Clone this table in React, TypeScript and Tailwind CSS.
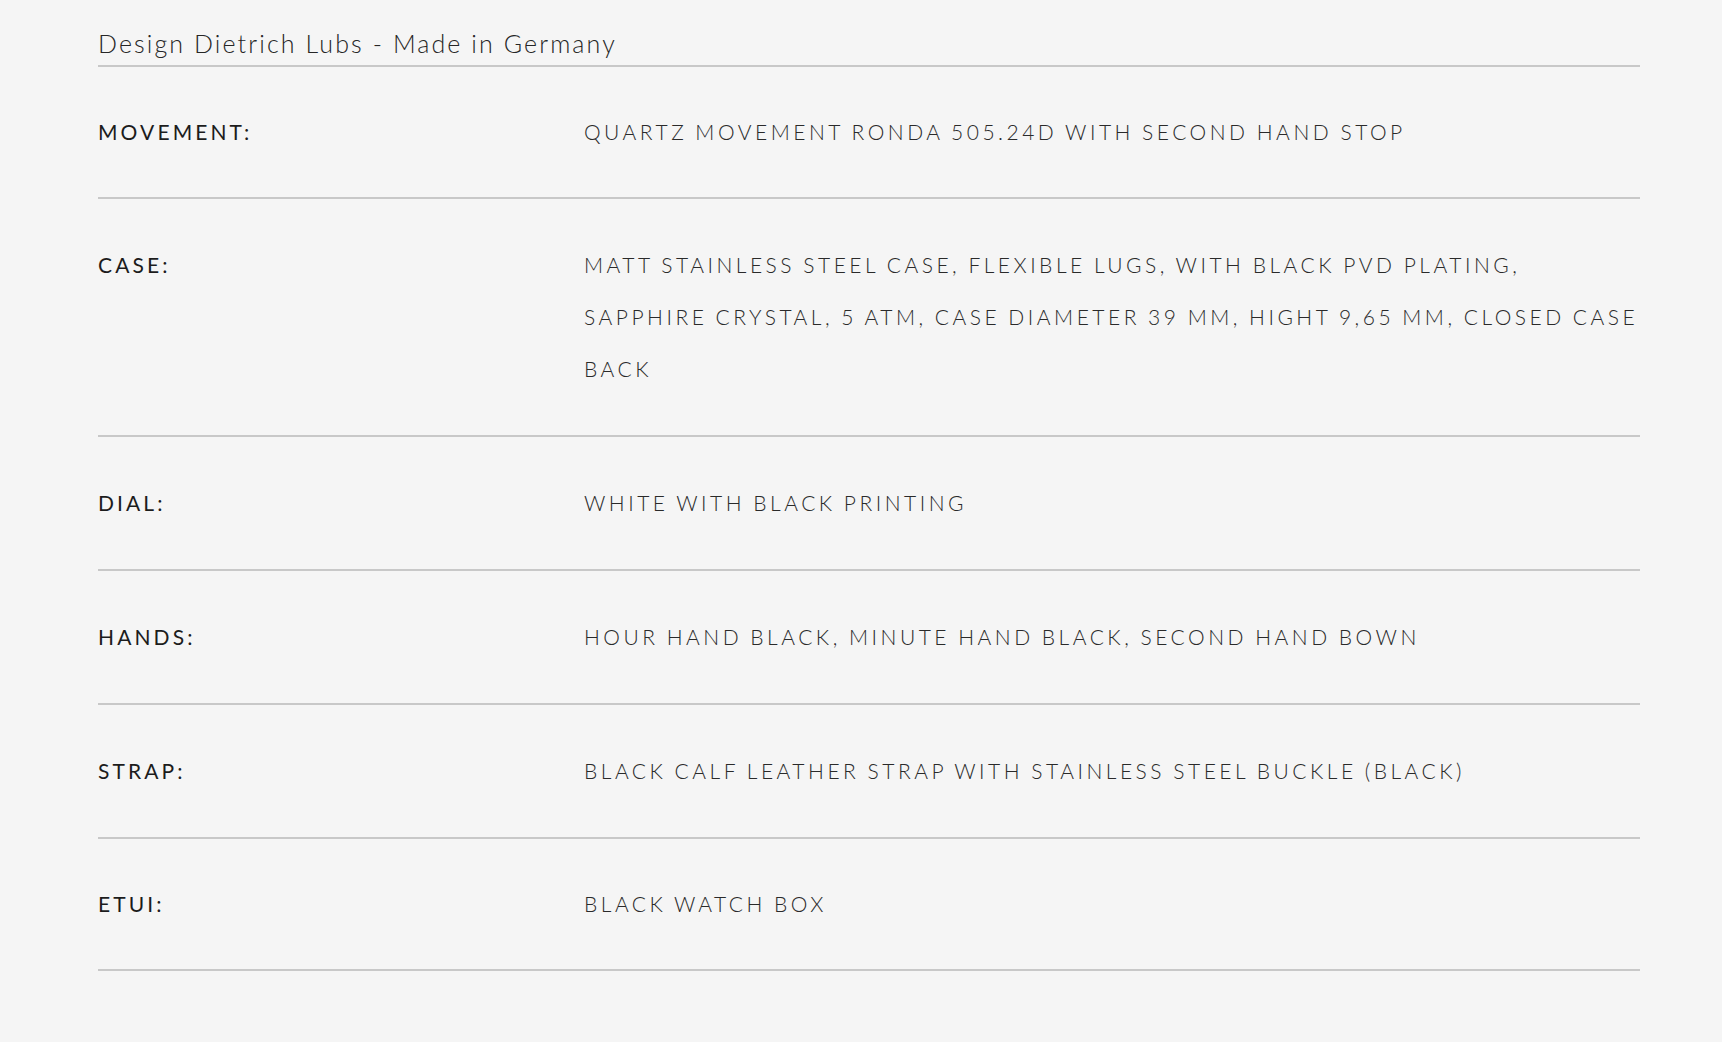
const specs = [
  { label: 'Movement:', value: 'Quartz movement Ronda 505.24D with second hand stop' },
  {
    label: 'Case:',
    value:
      'Matt stainless steel case, flexible lugs, with black PVD plating, sapphire crystal, 5 ATM, case diameter 39 mm, hight 9,65 mm, closed case back',
  },
  { label: 'Dial:', value: 'White with black printing' },
  { label: 'Hands:', value: 'Hour hand black, minute hand black, second hand bown' },
  { label: 'Strap:', value: 'Black calf leather strap with stainless steel buckle (black)' },
  { label: 'Etui:', value: 'Black watch box' },
];

export default function App() {
  return (
    <div className="min-h-screen bg-[#f5f5f5] font-['Lato',sans-serif]">
      <div className="ml-[98px] w-[1542px] pt-[27px]">
        {/* Header */}
        <h2 className="border-b-2 border-[#c8c8c8] pb-[6px] text-[25px] leading-[32px] font-light tracking-[2.1px] text-[#262626]">
          Design Dietrich Lubs - Made in Germany
        </h2>

        {/* Spec table */}
        <div>
          {specs.map((s) => (
            <div
              key={s.label}
              className="flex border-b-2 border-[#c8c8c8] py-[40px] leading-[52px] first:py-[39px] last:py-[39px]"
            >
              <div className="w-[486px] shrink-0 text-[21px] uppercase tracking-[3.1px] text-[#1c1c1c]">
                {s.label}
              </div>
              <div className="flex-1 text-[21px] font-light uppercase tracking-[3.5px] [word-spacing:-1px] text-[#2a2a2a]">
                {s.value}
              </div>
            </div>
          ))}
        </div>
      </div>
    </div>
  );
}
